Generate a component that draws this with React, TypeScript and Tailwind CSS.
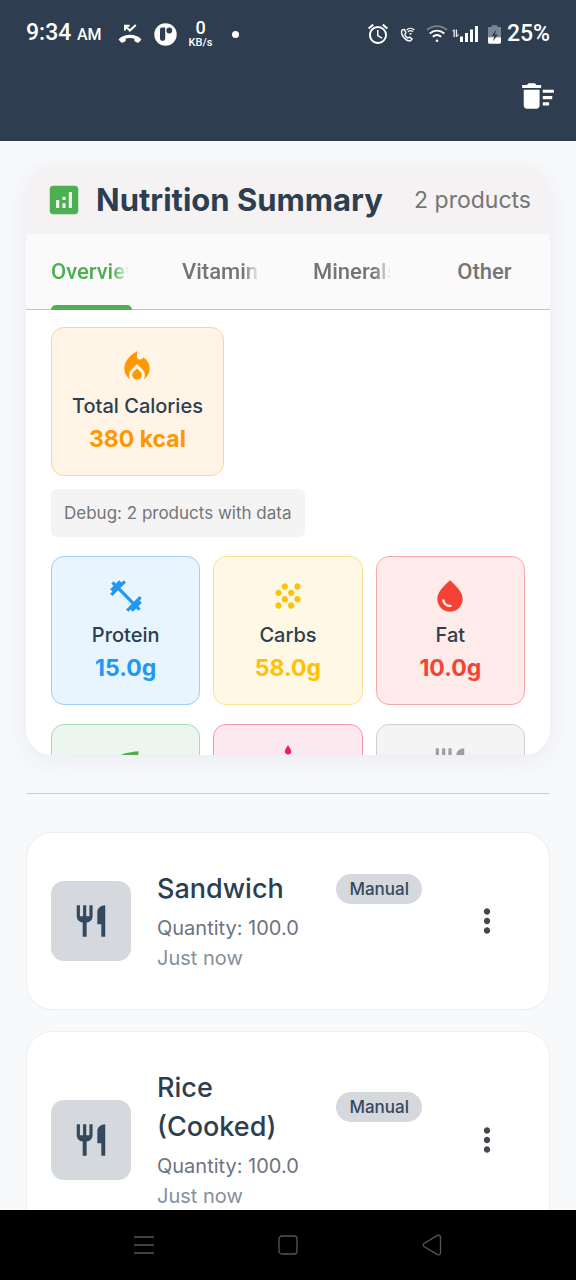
import React from "react";
import type { IconType } from "react-icons";
import {
  MdAlarm,
  MdAnalytics,
  MdCake,
  MdDeleteSweep,
  MdEco,
  MdFitnessCenter,
  MdGrain,
  MdLocalFireDepartment,
  MdMoreVert,
  MdRestaurant,
  MdWaterDrop,
} from "react-icons/md";

type Nutrient = { label: string; value: string; icon: IconType; card: string; accent: string };

const nutrients: Nutrient[] = [
  { label: "Protein", value: "15.0g", icon: MdFitnessCenter, card: "bg-[#e8f4fe] border-[#9fcdf5]", accent: "text-[#2196f3]" },
  { label: "Carbs", value: "58.0g", icon: MdGrain, card: "bg-[#fff8e5] border-[#fbe092]", accent: "text-[#ffc107]" },
  { label: "Fat", value: "10.0g", icon: MdWaterDrop, card: "bg-[#feebea] border-[#f5a9a6]", accent: "text-[#f44336]" },
  { label: "Fiber", value: "6.0g", icon: MdEco, card: "bg-[#edf6ee] border-[#aed9b1]", accent: "text-[#4caf50]" },
  { label: "Sugar", value: "4.0g", icon: MdCake, card: "bg-[#fce8ef] border-[#f394b5]", accent: "text-[#e91e63]" },
  { label: "Sodium", value: "0.0mg", icon: MdRestaurant, card: "bg-[#f4f4f4] border-[#d0d0d0]", accent: "text-[#9e9e9e]" },
];

const tabs = ["Overview", "Vitamins", "Minerals", "Other"];

const products = [
  { name: "Sandwich", quantity: "Quantity: 100.0", time: "Just now", source: "Manual" },
  { name: "Rice (Cooked)", quantity: "Quantity: 100.0", time: "Just now", source: "Manual" },
];

function MissedCallIcon() {
  return (
    <svg width="24" height="20" viewBox="0 0 24 20" fill="none" aria-hidden="true">
      <path d="M.5 15.500C6 9.300 18 9.300 23.500 15.500L20.500 18.800c-1.500 0-3.200-1-4.200-2v-2.200c-2.700-.8-5.900-.8-8.600 0v2.200c-1 1-2.700 2-4.200 2z" fill="white" />
      <path d="M7 6.500V1.800h4.700M7.300 2l4.500 4.500 6-5.500" stroke="white" strokeWidth="2" />
    </svg>
  );
}

function AppBadgeIcon() {
  return (
    <svg width="23" height="23" viewBox="0 0 23 23" fill="none" aria-hidden="true">
      <circle cx="11.500" cy="11.500" r="11.200" fill="white" />
      <path d="M11.200 4.500H7.800Q6 4.500 6 6.500v9.300q0 2 2 2h1.200q2 0 2-2z" fill="#2e3e50" />
      <circle cx="15.300" cy="7.500" r="2.900" fill="#2e3e50" />
    </svg>
  );
}

function WifiCallIcon() {
  return (
    <svg width="15" height="15" viewBox="0 0 16 16" fill="none" stroke="white" aria-hidden="true">
      <path d="M4.600 2.500 2.300 3C-.2 7.500 5.500 15 11 14.800l2-1.900-2.800-2.200-1.900 1.100C6.700 11 5.500 9.500 5.100 7.900l1.300-1.700z" strokeWidth="1.500" strokeLinejoin="round" />
      <path d="M7 3.200c2.400-2.500 5.900-2.500 8.300 0M8.500 5.100c1.600-1.500 3.700-1.500 5.300 0" strokeWidth="1.300" />
      <path d="m9.700 6.700 1.500 2 1.500-2z" fill="white" stroke="none" />
    </svg>
  );
}

function WifiIcon() {
  return (
    <svg width="22" height="18" viewBox="0 0 22 18" fill="none" stroke="white" strokeWidth="1.800" aria-hidden="true">
      <path d="M1 5c5.800-5.300 14.200-5.300 20 0" opacity=".35" />
      <path d="M3.700 8.500c4.300-3.900 10.300-3.900 14.600 0M6.800 11.800c2.500-2.200 5.900-2.200 8.400 0" />
      <circle cx="11" cy="15.800" r="1.300" fill="white" stroke="none" />
    </svg>
  );
}

function SignalIcon() {
  return (
    <svg width="26" height="18" viewBox="0 0 26 18" fill="white" aria-hidden="true">
      <path d="M0 6 2 4.500h.8V12H1.500V6.300H0zM3.800 4.500h1.300v5.700l1.400-1.200v1.500L4.600 12h-.8z" opacity=".9" />
      <path d="M8 11.500h3V17H8zM13 8h3v9h-3zM18 4.500h3V17h-3zM23 1h3v16h-3z" />
    </svg>
  );
}

function BatteryIcon() {
  return (
    <svg width="13" height="19" viewBox="0 0 14 20" aria-hidden="true">
      <path d="M4 0h6v2h4v11H0V2h4z" fill="#7b8692" />
      <path d="M0 13h14v5q0 2-2 2H2q-2 0-2-2z" fill="white" />
      <path d="M9 4.500 4 11.500h3L5.200 17.500l5.500-7.500H7.600z" fill="#2e3e50" />
    </svg>
  );
}

function StatusBar() {
  return (
    <div className="flex h-16 items-center justify-between px-[26px] pt-1 font-['Roboto',sans-serif] font-medium text-white">
      <div className="flex items-center">
        <p className="text-[23px] leading-8">
          9:34 <span className="text-[16px]">AM</span>
        </p>
        <div className="ml-4 flex items-center gap-3">
          <MissedCallIcon />
          <AppBadgeIcon />
          <div className="flex flex-col items-center">
            <span className="text-[18px] leading-[18px]">0</span>
            <span className="text-[11px] leading-3">KB/s</span>
          </div>
        </div>
        <span className="ml-5 size-[7px] rounded-full bg-white" />
      </div>
      <div className="flex items-center">
        <MdAlarm size={24} />
        <div className="ml-2.5 flex items-center gap-[11px]">
          <WifiCallIcon />
          <WifiIcon />
        </div>
        <div className="ml-1 flex items-center gap-2.5">
          <SignalIcon />
          <BatteryIcon />
        </div>
        <span className="ml-1.5 text-[23px] leading-8">25%</span>
      </div>
    </div>
  );
}

function NutrientCard({ label, value, icon: Icon, card, accent }: Nutrient) {
  return (
    <div className={`flex flex-col items-center rounded-[13px] border px-5 py-5 ${card}`}>
      <Icon size={38} className={accent} />
      <p className="mt-1.5 text-[20px] leading-7 font-medium whitespace-nowrap">{label}</p>
      <p className={`mt-[3px] text-[23px] leading-8 font-bold whitespace-nowrap ${accent}`}>{value}</p>
    </div>
  );
}

function NutritionSummary() {
  return (
    <section className="overflow-hidden rounded-[26px] bg-white shadow-[0_6px_26px_rgba(46,62,80,0.07)]">
      <header className="flex h-[68px] items-center justify-between bg-[#f4f2f3] px-[19px]">
        <div className="flex items-center gap-[13px]">
          <MdAnalytics size={38} className="text-[#4caf50]" />
          <h1 className="text-[31px] leading-10 font-bold whitespace-nowrap">Nutrition Summary</h1>
        </div>
        <p className="text-[23px] leading-8 whitespace-nowrap text-[#757575]">2 products</p>
      </header>
      <div role="tablist" className="grid grid-cols-4 border-b border-[#c0bfc5] bg-[#fafafa] font-['Roboto',sans-serif]">
        {tabs.map((tab, index) => (
          <button
            key={tab}
            type="button"
            role="tab"
            aria-selected={index === 0}
            className={`relative mx-[25px] flex h-[75px] min-w-0 items-center text-[22px] font-medium ${
              index === 0 ? "text-[#4caf50]" : "text-[#757575]"
            } ${index === 3 ? "justify-center" : ""}`}
          >
            <span
              className={
                index === 3
                  ? ""
                  : "w-full overflow-hidden text-left whitespace-nowrap [mask-image:linear-gradient(to_right,black_76%,transparent_96%)]"
              }
            >
              {tab}
            </span>
            {index === 0 && <span className="absolute inset-x-0 -bottom-px h-[5px] rounded-t-[5px] bg-[#4caf50]" />}
          </button>
        ))}
      </div>
      <div role="tabpanel" className="max-h-[445px] overflow-hidden px-[25px] pt-[17px]">
        <div className="flex flex-col items-start">
          <NutrientCard
            label="Total Calories"
            value="380 kcal"
            icon={MdLocalFireDepartment}
            card="bg-[#fff4e6] border-[#fbd49a]"
            accent="text-[#ff9800]"
          />
          <p className="mt-[13px] rounded-md bg-[#f4f4f4] px-[13px] py-3 text-[17px] leading-6 text-[#757575]">
            Debug: 2 products with data
          </p>
        </div>
        <div className="mt-[19px] grid grid-cols-3 gap-x-[13px] gap-y-[19px]">
          {nutrients.map((nutrient) => (
            <NutrientCard key={nutrient.label} {...nutrient} />
          ))}
        </div>
      </div>
    </section>
  );
}

function ProductCard({ name, quantity, time, source }: (typeof products)[number]) {
  return (
    <li className="flex items-center rounded-[26px] border border-[#eceef0] bg-white px-6 py-9">
      <div className="flex size-20 shrink-0 items-center justify-center rounded-[13px] bg-[#d5d8dc] text-[#34495e]">
        <MdRestaurant size={38} />
      </div>
      <div className="ml-[26px] min-w-0 flex-1">
        <div className="flex items-center gap-[13px]">
          <h2 className="min-w-0 flex-1 text-[27px] leading-[39px] font-medium">{name}</h2>
          <span className="rounded-full bg-[#d5d8dc] px-[13px] py-[3px] text-[17px] leading-6 font-medium text-[#34495e]">
            {source}
          </span>
        </div>
        <p className="mt-[5px] text-[20px] leading-[30px] text-[#6c7580]">{quantity}</p>
        <p className="text-[20px] leading-[30px] text-[#85909b]">{time}</p>
      </div>
      <button
        type="button"
        aria-label={`More options for ${name}`}
        className="ml-[26px] flex h-[77px] w-[77px] shrink-0 items-center justify-center text-[#49454f]"
      >
        <MdMoreVert size={38} />
      </button>
    </li>
  );
}

function SystemNavigation() {
  return (
    <nav
      aria-label="System"
      className="grid h-[70px] shrink-0 grid-cols-3 items-center justify-items-center bg-black px-[12.5%] text-[#555555]"
    >
      <button type="button" aria-label="Recent apps">
        <svg width="20" height="20" viewBox="0 0 20 20" stroke="currentColor" strokeWidth="1.300" aria-hidden="true">
          <path d="M0 2h20M0 10h20M0 18h20" />
        </svg>
      </button>
      <button type="button" aria-label="Home">
        <svg width="20" height="20" viewBox="0 0 20 20" fill="none" stroke="currentColor" strokeWidth="1.300" aria-hidden="true">
          <rect x="1" y="1" width="18" height="18" rx="3" />
        </svg>
      </button>
      <button type="button" aria-label="Back">
        <svg width="20" height="22" viewBox="0 0 20 22" fill="none" stroke="currentColor" strokeWidth="1.300" aria-hidden="true">
          <path d="M2 9.500 15.500 1.400Q18.500.3 18.500 3.500v15q0 3-3 2.100L2 12.500Q.3 11 2 9.500z" />
        </svg>
      </button>
    </nav>
  );
}

export default function App() {
  return (
    <div className="flex h-screen flex-col bg-[#f8f9fb] font-['Inter',sans-serif] text-[#2c3e50]">
      <header className="shrink-0 bg-[#2e3e50] pb-[13px]">
        <StatusBar />
        <div className="flex h-16 items-center justify-end px-[19px] text-white">
          <button type="button" aria-label="Clear all products">
            <MdDeleteSweep size={38} />
          </button>
        </div>
      </header>
      <main className="min-h-0 flex-1 overflow-hidden px-[26px] pt-[25px]">
        <NutritionSummary />
        <hr className="mt-[38px] border-t border-[#cdcfd4]" />
        <ul className="mt-[38px] flex flex-col gap-[21px]">
          {products.map((product) => (
            <ProductCard key={product.name} {...product} />
          ))}
        </ul>
      </main>
      <SystemNavigation />
    </div>
  );
}
